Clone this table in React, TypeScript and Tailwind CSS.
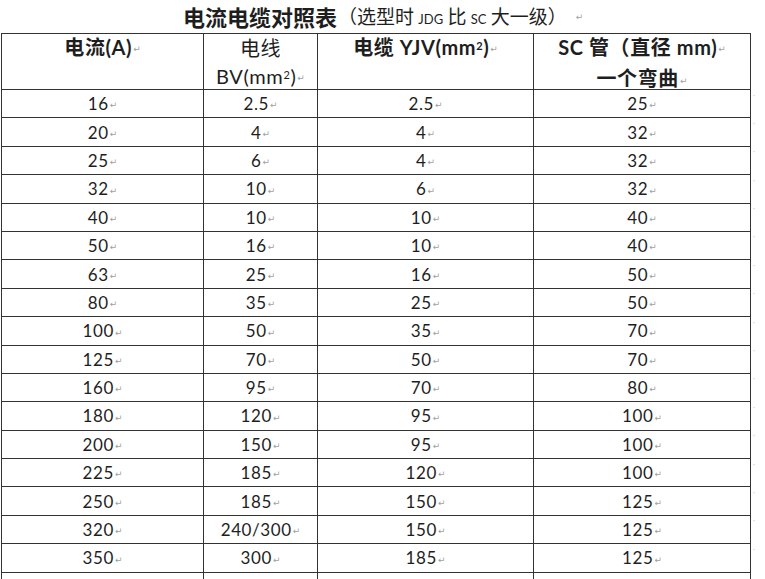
const rows: [string, string, string, string][] = [
  ['16', '2.5', '2.5', '25'],
  ['20', '4', '4', '32'],
  ['25', '6', '4', '32'],
  ['32', '10', '6', '32'],
  ['40', '10', '10', '40'],
  ['50', '16', '10', '40'],
  ['63', '25', '16', '50'],
  ['80', '35', '25', '50'],
  ['100', '50', '35', '70'],
  ['125', '70', '50', '70'],
  ['160', '95', '70', '80'],
  ['180', '120', '95', '100'],
  ['200', '150', '95', '100'],
  ['225', '185', '120', '100'],
  ['250', '185', '150', '125'],
  ['320', '240/300', '150', '125'],
  ['350', '300', '185', '125'],
];

// Word paragraph mark after each cell
function Mark() {
  return (
    <span className="ml-[1px] align-middle font-['DejaVu_Sans',sans-serif] text-[9px] font-normal tracking-normal text-[#a0a0a0]">
      ↵
    </span>
  );
}

const cell = 'border-[1.5px] border-[#333] text-center align-middle';
const head = 'border-[1.5px] border-[#333] text-center align-top text-[20px]';
const headBox = 'h-[56px] -mt-[1px] leading-[29px]';

export default function App() {
  return (
    <div className="h-[579px] w-[765px] overflow-hidden bg-white font-['Lato','Noto_Sans_CJK_SC',sans-serif] text-[#1e1e1e]">
      {/* Title */}
      <div className="flex h-[33px] items-center pl-[183px] pb-[2px]">
        <span className="font-['Noto_Sans_CJK_SC',sans-serif] text-[22px] font-bold leading-none">
          电流电缆对照表
        </span>
        <span className="ml-[1px] font-['Noto_Sans_CJK_SC',sans-serif] text-[19px] leading-none">
          （选型时 <span className="font-['Lato',sans-serif] text-[13px]">JDG</span> 比{' '}
          <span className="font-['Lato',sans-serif] text-[13px]">SC</span> 大一级）
        </span>
        <span className="ml-[8px]">
          <Mark />
        </span>
      </div>

      {/* Table */}
      <table className="ml-[1px] table-fixed border-collapse text-[17px] tracking-[0.6px]">
        <colgroup>
          <col className="w-[202px]" />
          <col className="w-[114px]" />
          <col className="w-[216px]" />
          <col className="w-[217px]" />
          <col className="w-[14px]" />
        </colgroup>
        <thead>
          <tr>
            <th className={`${head} font-bold`}>
              <div className={headBox}>
                电流(A)
                <Mark />
              </div>
            </th>
            <th className={`${head} font-normal`}>
              <div className={headBox}>
                <div className="font-['Noto_Sans_CJK_SC',sans-serif]">电线</div>
                <div>
                  BV(mm<sup className="text-[11px]">2</sup>)
                  <Mark />
                </div>
              </div>
            </th>
            <th className={`${head} font-bold`}>
              <div className={headBox}>
                电缆 YJV(mm<sup className="text-[11px]">2</sup>)
                <Mark />
              </div>
            </th>
            <th className={`${head} font-bold`}>
              <div className={headBox}>
                <div>
                  SC 管（直径 mm)
                  <Mark />
                </div>
                <div>
                  一个弯曲
                  <Mark />
                </div>
              </div>
            </th>
            <th />
          </tr>
        </thead>
        <tbody>
          {rows.map((r) => (
            <tr key={r[0]} className="h-[28.4px]">
              {r.map((v, i) => (
                <td key={i} className={`${cell} leading-none`}>
                  {v}
                  <Mark />
                </td>
              ))}
              <td className="pl-[2px] align-top text-[8px] leading-[10px] text-[#c8c8c8]">·</td>
            </tr>
          ))}
          <tr className="h-[28.4px]">
            <td className={cell} />
            <td className={cell} />
            <td className={cell} />
            <td className={cell} />
            <td />
          </tr>
        </tbody>
      </table>
    </div>
  );
}
